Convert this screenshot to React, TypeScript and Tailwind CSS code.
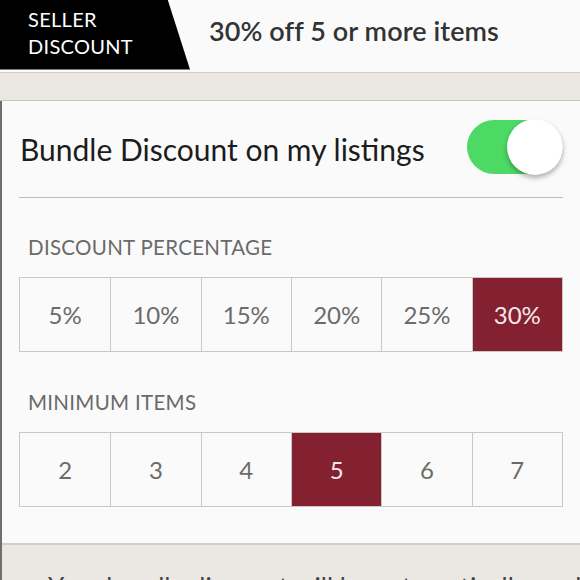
import React from "react";

const percentages = ["5%", "10%", "15%", "20%", "25%", "30%"];
const minimums = ["2", "3", "4", "5", "6", "7"];

interface OptionRowProps {
  options: string[];
  selected: string;
}

const OptionRow = ({ options, selected }: OptionRowProps) => (
  <div className="grid grid-cols-6 h-[75px] border border-[#c9c7c7]">
    {options.map((opt, i) => {
      const active = opt === selected;
      return (
        <div
          key={opt}
          className={
            "flex items-center justify-center text-[24px] " +
            (i > 0 ? "border-l border-[#c9c7c7] " : "") +
            (active ? "bg-[#832130] text-[#f6e9ea]" : "text-[#6b6b6b]")
          }
        >
          {opt}
        </div>
      );
    })}
  </div>
);

export default function App() {
  return (
    <div
      className="w-[580px] h-[580px] overflow-hidden bg-[#fbfafa] text-[#222]"
      style={{ fontFamily: "Lato, 'Open Sans', sans-serif" }}
    >
      {/* header strip */}
      <div className="flex items-center h-[73px] border-b border-[#cfcdca]">
        <div className="h-full w-[190px] shrink-0 bg-black text-white [clip-path:polygon(0_0,167px_0,190px_100%,0_100%)] pl-[28px] flex flex-col justify-center text-[20px] leading-[27px] tracking-[0.3px] -mt-[5px] pt-[5px]">
          <span className="-mt-[6px]">SELLER</span>
          <span>DISCOUNT</span>
        </div>
        <div className="pl-[19px] text-[27px] font-semibold text-[#333] tracking-[0.1px] -mt-[10px]">
          30% off 5 or more items
        </div>
      </div>

      <div className="h-[28px] bg-[#ebe8e3] border-b border-[#c9c6c2]" />

      <div className="border-l-2 border-[#6e6e6e]">
        {/* settings card */}
        <div className="bg-[#fbfafa] px-[17px] h-[442px]">
          <div className="flex items-center justify-between h-[97px] border-b border-[#bdbbbb]">
            <span className="text-[30px] text-[#1c1c1c] pl-[1px] mt-[1px]">
              Bundle Discount on my listings
            </span>
            <div className="relative w-[96px] h-[54px] rounded-full bg-[#4cd964] -mt-[4px]">
              <div className="absolute right-0 -top-[1px] w-[56px] h-[56px] rounded-full bg-white shadow-[0_3px_5px_rgba(0,0,0,0.3)]" />
            </div>
          </div>

          <div className="pt-[37px] pl-[9px] text-[20.5px] text-[#6a6a6a] tracking-[0.3px] leading-[24px]">
            DISCOUNT PERCENTAGE
          </div>
          <div className="mt-[18px]">
            <OptionRow options={percentages} selected="30%" />
          </div>

          <div className="pt-[38px] pl-[9px] text-[20.5px] text-[#6a6a6a] tracking-[0.3px] leading-[24px]">
            MINIMUM ITEMS
          </div>
          <div className="mt-[18px]">
            <OptionRow options={minimums} selected="5" />
          </div>
        </div>

        {/* footer note */}
        <div className="border-t-2 border-[#cfcdca] bg-[#ebe8e3] h-[60px] pt-[25px] pl-[46px] text-[26px] leading-[34px] text-[#444] whitespace-nowrap">
          Your bundle discount will be automatically applied
        </div>
      </div>
    </div>
  );
}
